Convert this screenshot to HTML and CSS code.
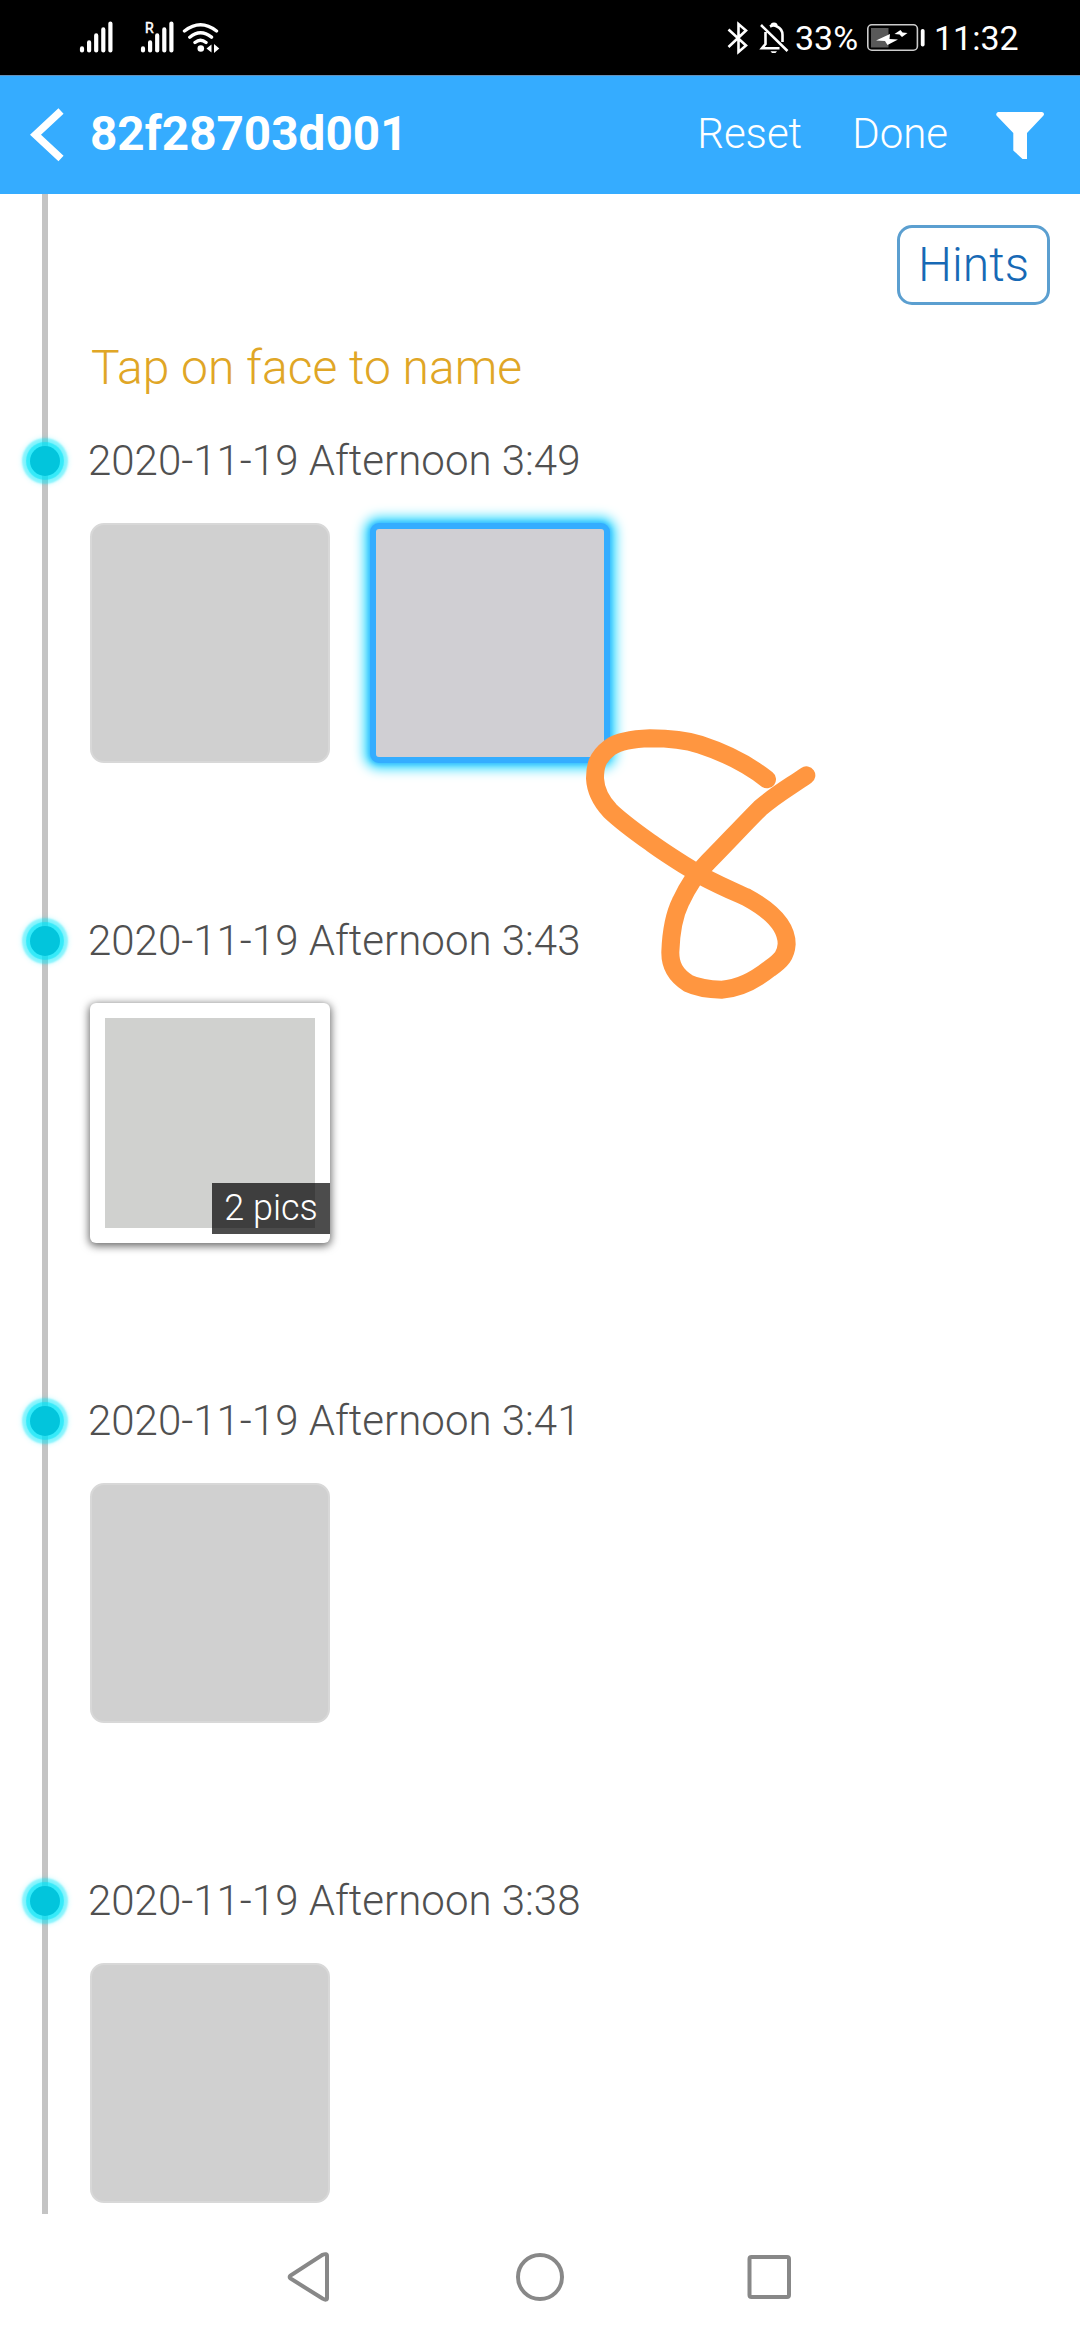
FILE: index.html
```html
<!DOCTYPE html>
<html lang="en">
<head>
<meta charset="utf-8">
<title>82f28703d001</title>
<link rel="stylesheet" href="styles.css">
</head>
<body>
<div class="status">
  <svg class="status-left" width="150" height="40" viewBox="75 18 150 40" fill="none" stroke="#fff" stroke-linecap="round">
    <path stroke-width="4.2" d="M82 48.400V50.400M89.100 42.400V50.400M96.200 35.400V50.400M103.300 29.400V50.400M110.400 23.600V50.400"/>
    <path stroke-width="4.200" d="M143 48.400V50.400M150.100 42.400V50.400M157.200 35.400V50.400M164.300 29.400V50.400M171.400 23.600V50.400"/>
    <text class="roaming" x="145" y="32.500">R</text>
    <path stroke-width="3.400" d="M184.500 31Q200.500 18.500 216.500 31M189.800 37.200Q200.500 28.500 211.500 37.200M195 42.500Q200.500 38 206 42.500"/>
    <circle cx="200.800" cy="48.500" r="3.300" fill="#fff" stroke="none"/>
    <path fill="#fff" stroke="none" d="M211.500 44.500V52.500L206.500 48.500ZM214 44L219.300 48.500L214 53Z"/>
  </svg>
  <div class="status-right">
    <svg width="62" height="36" viewBox="727 19 62 36" fill="none" stroke="#fff" stroke-width="2.600">
      <path d="M728.500 28.500L746 44.500L738.500 51V23L746 29.500L728.500 46"/>
      <path d="M761 24L787.500 50M765.500 31V43L762 47.300H779.500M770 25.500Q773.500 23.500 777 25.500Q782.500 28 782.500 34V41M771.500 25.500Q771.500 22.800 774 22.800T776.500 25.500"/>
      <path d="M770.500 50.300H777L775.500 52H772Z" fill="#fff" stroke="none"/>
    </svg>
    <span class="percent">33%</span>
    <svg width="60" height="30" viewBox="866 23 60 30">
      <rect x="867.800" y="24.800" width="49.600" height="25.400" rx="4" fill="none" stroke="#ccc" stroke-width="1.600"/>
      <rect x="871" y="28" width="17.500" height="19.500" fill="#595959"/>
      <path fill="#fff" d="M890 34L876 40.500L885 41L887.500 45L898 39.500L889.500 39ZM900.500 30L894.500 34L899.500 34.500L902 37L907.500 33L902.500 32.500Z"/>
      <rect x="920.800" y="29" width="3.800" height="17.500" rx="1.800" fill="#fff"/>
    </svg>
    <span class="clock">11:32</span>
  </div>
</div>

<header class="bar">
  <svg class="back" width="36" height="58" viewBox="30 106 36 58"><path d="M61 111L35.500 134.800L61 158.500" fill="none" stroke="#fff" stroke-width="7.500" stroke-linejoin="miter"/></svg>
  <h1 class="title">82f28703d001</h1>
  <span class="action reset">Reset</span>
  <span class="action done">Done</span>
  <svg class="filter" width="50" height="50" viewBox="995 111 50 50"><path fill="#fff" d="M998 113H1042Q1045 114 1043.500 116.500L1027 134V160H1022.500L1013.300 151.500V134L996.500 116.500Q995.500 114 998 113Z"/></svg>
</header>

<main class="timeline">
  <div class="tools"><button class="hints">Hints</button></div>
  <p class="tip">Tap on face to name</p>

  <section class="entry">
    <i class="dot"></i><h2 class="date">2020-11-19 Afternoon 3:49</h2>
    <div class="photos"><div class="photo"></div><div class="photo selected"></div></div>
  </section>
  <section class="entry">
    <i class="dot"></i><h2 class="date">2020-11-19 Afternoon 3:43</h2>
    <div class="photos"><div class="photo stack"><span class="count">2 pics</span></div></div>
  </section>
  <section class="entry">
    <i class="dot"></i><h2 class="date">2020-11-19 Afternoon 3:41</h2>
    <div class="photos"><div class="photo"></div></div>
  </section>
  <section class="entry last">
    <i class="dot"></i><h2 class="date">2020-11-19 Afternoon 3:38</h2>
    <div class="photos"><div class="photo"></div></div>
  </section>
</main>

<nav class="nav">
  <svg width="50" height="52" viewBox="285 2251 50 52"><path d="M322.500 2254.800Q327 2253 327 2256V2298Q327 2301 322.500 2298.500L290.500 2278.500Q289 2277 290.500 2275.500Z" fill="none" stroke="#888" stroke-width="4"/></svg>
  <svg width="50" height="52" viewBox="515 2251 50 52"><circle cx="540" cy="2277" r="22" fill="none" stroke="#888" stroke-width="4"/></svg>
  <svg width="50" height="52" viewBox="744 2251 50 52"><rect x="749.500" y="2257" width="39.500" height="40" rx="2" fill="none" stroke="#888" stroke-width="4"/></svg>
</nav>

<svg class="doodle" width="280" height="320" viewBox="0 0 840 960">
  <path d="M621 238C560 190 500 160 420 134C370 118 320 115 270 115C210 117 175 125 150 142C110 172 105 200 105 235C107 275 125 305 150 332C190 370 230 398 275 430C320 463 365 490 425 528C475 555 515 572 560 592C630 630 680 675 680 732C678 765 665 780 630 805C580 845 530 867 485 869C440 868 410 862 385 850C345 825 330 795 331 755C333 700 340 650 362 605C385 555 405 525 440 490C490 440 550 375 600 325C645 285 690 260 739 226"/>
</svg>
</body>
</html>
```
FILE: styles.css
```css
* { box-sizing: border-box; margin: 0; padding: 0; }

body {
  position: relative;
  width: 1080px;
  height: 2340px;
  display: flex;
  flex-direction: column;
  overflow: hidden;
  background: #fff;
  font-family: Roboto, "Liberation Sans", sans-serif;
}

svg { display: block; flex: none; }

.status {
  height: 75px;
  flex: none;
  display: flex;
  justify-content: space-between;
  align-items: center;
  padding: 0 62px 0 75px;
  background: #000;
  color: #fff;
  white-space: nowrap;
}
.roaming { font-size: 14px; fill: #fff; stroke: #fff; stroke-width: .5px; }
.status-right { display: flex; align-items: center; font-size: 34px; }
.percent { width: 77px; padding-left: 6px; }
.clock { width: 92px; padding-left: 8px; }

.bar {
  height: 119px;
  flex: none;
  display: flex;
  align-items: center;
  padding: 0 35px 0 30px;
  background: #35acff;
  color: #fff;
  border-top: 1px solid #648fb8;
}
.title { margin-left: 24px; padding-bottom: 3px; font-size: 47.7px; font-weight: 700; }
.action { padding-bottom: 4px; font-size: 42px; font-weight: 300; }
.reset { margin-left: auto; }
.done { margin: 0 47px 0 50px; }

.timeline {
  height: 2020px;
  flex: none;
  background: linear-gradient(#c4c4c4, #c4c4c4) 42px 0 / 6px 100% no-repeat;
}
.tools { display: flex; justify-content: flex-end; padding: 31px 30px 0; }
.hints {
  width: 153px;
  height: 80px;
  border: 3px solid #5b9fd0;
  border-radius: 15px;
  background: #fff;
  color: #1769b5;
  font: 300 48px/74px Roboto, sans-serif;
}
.tip {
  height: 56px;
  margin-top: 36px;
  padding-left: 91px;
  color: #e0a626;
  font-size: 48px;
  font-weight: 300;
  line-height: 54px;
}

.entry {
  height: 480px;
  display: grid;
  grid-template-columns: 90px 1fr;
  grid-template-rows: 50px 240px;
  row-gap: 37px;
  align-items: center;
}
.tip + .entry { margin-top: 39px; }
.last { height: 327px; }
.dot {
  width: 30px;
  height: 30px;
  margin-left: 30px;
  border-radius: 50%;
  background: #02c5dc;
  box-shadow: 0 0 1px 4px rgba(0, 226, 246, .6), 0 0 2px 8px rgba(0, 232, 250, .42), 0 0 4px 10px rgba(0, 235, 255, .1);
}
.date { margin-left: -2px; color: #505050; font-size: 42px; font-weight: 300; line-height: 52px; white-space: nowrap; }
.photos { grid-column: 2; display: flex; gap: 40px; }
.photo {
  width: 240px;
  height: 240px;
  border: 2px solid #d8d8d8;
  border-radius: 14px;
  background: #d0d0d0;
}
.selected {
  border: 6px solid #34adff;
  border-radius: 9px;
  background: #d0cfd3;
  box-shadow: 0 0 5px 1px #34b4ff, 0 0 12px 6px #36dcff;
}
.stack {
  display: flex;
  align-items: flex-end;
  justify-content: flex-end;
  padding-bottom: 9px;
  border: 0;
  border-radius: 6px;
  background: linear-gradient(#d0d1cf, #d0d1cf) center / 210px 210px no-repeat #fff;
  box-shadow: 0 2px 8px 1px rgba(0, 0, 0, .6);
}
.count {
  width: 118px;
  height: 51px;
  background: rgba(0, 0, 0, .7);
  color: #fff;
  font-size: 36px;
  font-weight: 300;
  line-height: 50px;
  text-align: center;
}

.nav {
  height: 126px;
  flex: none;
  display: flex;
  justify-content: space-between;
  align-items: center;
  padding: 0 286px 0 285px;
}

/* Freehand annotation drawn over the timeline */
.doodle { position: absolute; left: 560px; top: 700px; }
.doodle path { fill: none; stroke: #ff9640; stroke-width: 54; stroke-linecap: round; stroke-linejoin: round; }
```
